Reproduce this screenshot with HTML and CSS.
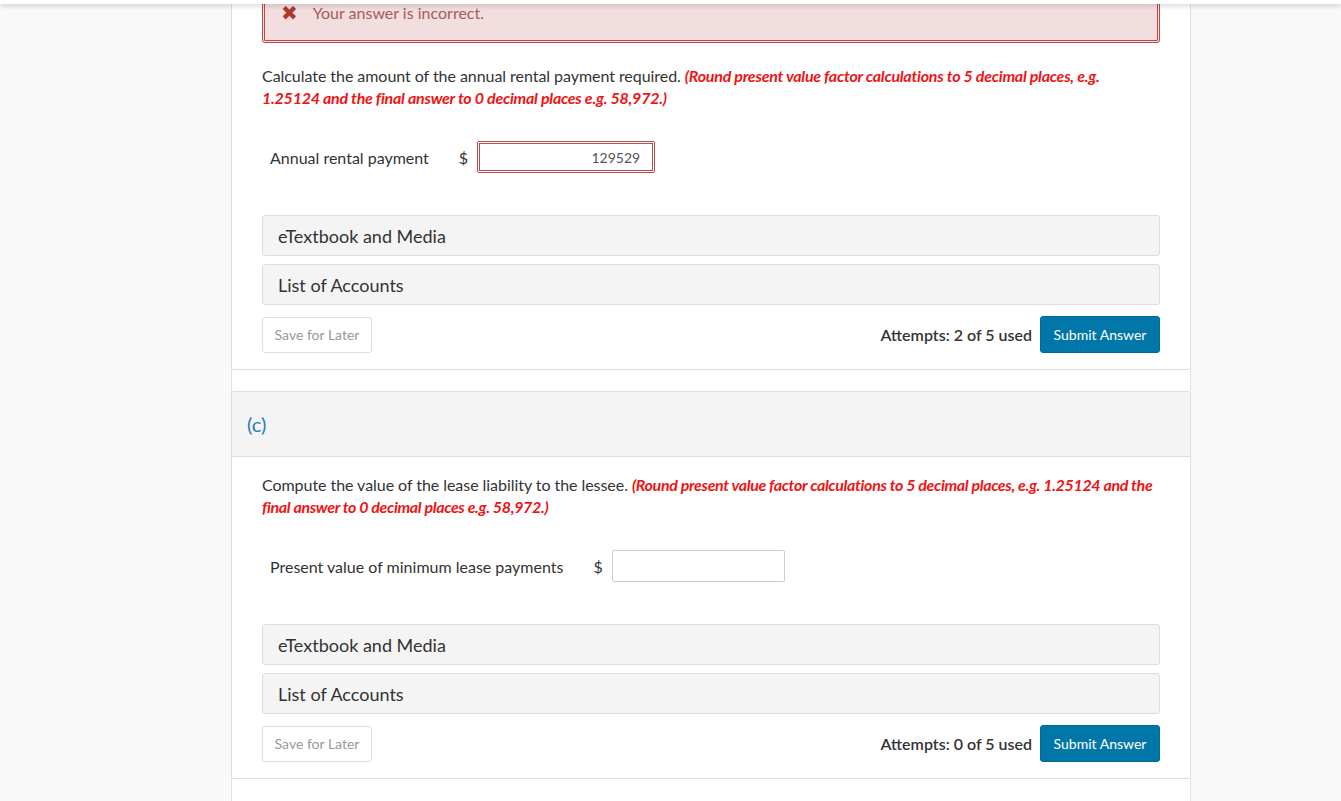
FILE: index.html
```html
<!DOCTYPE html>
<html lang="en">
<head>
  <meta charset="UTF-8" />
  <title>Question</title>
  <link rel="stylesheet" href="styles.css">
</head>
<body>
  <div class="top-bar"></div>

  <div class="column">
    <!-- part (b) -->
    <div class="card">
      <div class="card-body first">
        <div class="feedback">
          <span class="feedback-icon">&#10006;</span>
          <span>Your answer is incorrect.</span>
        </div>

        <p class="question">
          Calculate the amount of the annual rental payment required.
          <em class="hint">(Round present value factor calculations to 5 decimal places, e.g. 1.25124 and the final answer to 0 decimal places e.g. 58,972.)</em>
        </p>

        <div class="answer-row">
          <span class="answer-label">Annual rental payment</span>
          <span class="currency">$</span>
          <input type="text" class="answer-input wrong" value="129529">
        </div>

        <div class="panel">eTextbook and Media</div>
        <div class="panel">List of Accounts</div>

        <div class="actions">
          <button class="save-btn">Save for Later</button>
          <div class="attempts">
            <span>Attempts: 2 of 5 used</span>
            <button class="submit-btn">Submit Answer</button>
          </div>
        </div>
      </div>
    </div>

    <!-- part (c) -->
    <div class="card">
      <div class="card-header">(c)</div>
      <div class="card-body">
        <p class="question">
          Compute the value of the lease liability to the lessee.
          <em class="hint">(Round present value factor calculations to 5 decimal places, e.g. 1.25124 and the final answer to 0 decimal places e.g. 58,972.)</em>
        </p>

        <div class="answer-row">
          <span class="answer-label">Present value of minimum lease payments</span>
          <span class="currency">$</span>
          <input type="text" class="answer-input" value="">
        </div>

        <div class="panel">eTextbook and Media</div>
        <div class="panel">List of Accounts</div>

        <div class="actions">
          <button class="save-btn">Save for Later</button>
          <div class="attempts">
            <span>Attempts: 0 of 5 used</span>
            <button class="submit-btn">Submit Answer</button>
          </div>
        </div>
      </div>
    </div>
  </div>
</body>
</html>
```

FILE: styles.css
```css
* {
  box-sizing: border-box;
}

body {
  margin: 0;
  font-family: Lato, 'Open Sans', sans-serif;
  background-color: #f9f9f9;
  color: #333;
  overflow: hidden;
}

.top-bar {
  position: fixed;
  top: 0;
  left: 0;
  right: 0;
  height: 4px;
  background: #fff;
  box-shadow: 0 2px 5px rgba(0, 0, 0, 0.18);
  z-index: 10;
}

.column {
  width: 960px;
  margin-left: 231px;
  margin-top: -40px;
  background: #fff;
  border-left: 1px solid #e2e2e2;
  border-right: 1px solid #e2e2e2;
  min-height: 900px;
  padding-bottom: 40px;
}

.card {
  margin-left: -1px;
  margin-right: -1px;
  background: #fff;
  border: 1px solid #ddd;
  border-radius: 3px;
  margin-bottom: 21px;
}

.card-header {
  height: 65px;
  background: #f4f4f4;
  border-bottom: 1px solid #ddd;
  padding: 20px 15px;
  font-size: 20px;
  color: #1b7fbd;
}

.card-body {
  padding: 17px 30px 16px;
}

.card-body.first {
  padding-top: 0;
}

/* feedback */
.feedback {
  height: 82px;
  background: #f2dede;
  border: 3px double #b94a48;
  border-radius: 3px;
  padding: 40px 16px 19px;
  display: flex;
  align-items: center;
  gap: 15px;
  font-size: 16px;
  color: #a85a5a;
  margin-bottom: 22px;
}

.feedback-icon {
  color: #b3372f;
  font-size: 20px;
  font-weight: bold;
  font-family: 'DejaVu Sans', sans-serif;
}

.question {
  margin: 0;
  font-size: 16px;
  line-height: 22px;
  letter-spacing: -0.05px;
}

.hint {
  color: #ee1414;
  font-weight: bold;
  letter-spacing: -0.35px;
}

.first .hint {
  letter-spacing: -0.25px;
}

.answer-row {
  display: flex;
  align-items: center;
  padding-left: 8px;
  margin-top: 32px;
  margin-bottom: 42px;
  font-size: 16px;
}

.answer-label {
  margin-right: 30px;
}

.currency {
  margin-right: 9px;
}

.answer-input {
  width: 173px;
  height: 32px;
  border: 1px solid #ccc;
  border-radius: 2px;
  font-family: Lato, sans-serif;
  font-size: 14px;
  color: #555;
  text-align: right;
  padding: 0 12px;
}

.answer-input.wrong {
  width: 178px;
  border: 3px double #b94a48;
}

.panel {
  height: 41px;
  background: #f4f4f4;
  border: 1px solid #ddd;
  border-radius: 3px;
  padding: 0 15px;
  display: flex;
  align-items: center;
  font-size: 18px;
  margin-bottom: 8px;
}

.actions {
  display: flex;
  justify-content: space-between;
  align-items: center;
  margin-top: 11px;
}

.save-btn {
  width: 110px;
  height: 36px;
  background: #fff;
  border: 1px solid #ddd;
  border-radius: 3px;
  font-family: Lato, sans-serif;
  font-size: 14px;
  color: #999;
}

.attempts {
  display: flex;
  align-items: center;
  gap: 8px;
  font-size: 16px;
  font-weight: 600;
  color: #333;
}

.submit-btn {
  width: 120px;
  height: 37px;
  background: #0077a8;
  border: 1px solid #006a96;
  border-radius: 3px;
  color: #fff;
  font-family: Lato, sans-serif;
  font-size: 14px;
}
```
